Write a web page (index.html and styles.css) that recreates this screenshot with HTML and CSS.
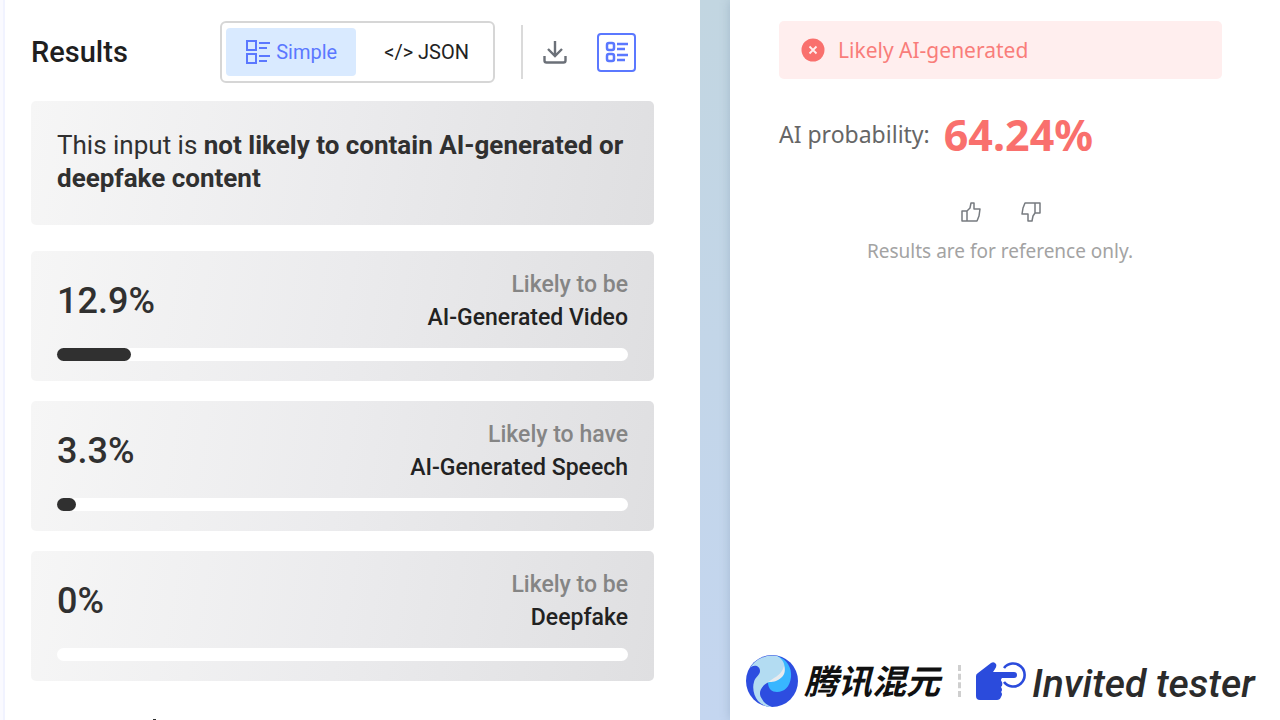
FILE: index.html
```html
<!DOCTYPE html>
<html lang="en">
<head>
    <meta charset="UTF-8">
    <meta name="viewport" content="width=device-width, initial-scale=1.0">
    <link rel="stylesheet" href="styles.css">
    <title>Results</title>
</head>
<body>
    <main class="results">
        <div class="topbar">
            <h1 class="title">Results</h1>
            <div class="tabs">
                <button type="button" class="tab active">
                    <svg width="25" height="25" viewBox="0 0 25 25" fill="none" stroke="currentColor" stroke-width="2">
                        <rect x="1" y="1" width="9" height="9"/>
                        <rect x="1" y="14" width="9" height="9"/>
                        <path d="M13 3h11M13 8h8M13 16h11M13 21h8"/>
                    </svg>
                    Simple
                </button>
                <button type="button" class="tab">&lt;/&gt; JSON</button>
            </div>
            <div class="tools">
                <button type="button" class="tool" aria-label="Download">
                    <svg width="24" height="24" viewBox="0 0 24 24" fill="none" stroke="currentColor" stroke-width="2.4">
                        <path d="M12 1v14M5 9l7 7l7-7M1.500 16v4.500q0 2 2 2h17q2 0 2-2V16"/>
                    </svg>
                </button>
                <button type="button" class="tool boxed" aria-label="Summary view">
                    <svg width="24" height="22" viewBox="0 0 24 22" fill="none" stroke="currentColor" stroke-width="2.500">
                        <rect x="2" y="2" width="7" height="7" rx="2"/>
                        <rect x="2" y="13" width="7" height="7" rx="2"/>
                        <path d="M12 3h11M12 8h8M12 14h11M12 19h8"/>
                    </svg>
                </button>
            </div>
        </div>

        <p class="card summary">This input is <b>not likely to contain AI-generated or deepfake content</b></p>

        <section class="card score">
            <span class="percent">12.9%</span>
            <p class="label">Likely to be <b>AI-Generated Video</b></p>
            <div class="bar"><div class="fill" style="width: 12.9%"></div></div>
        </section>
        <section class="card score">
            <span class="percent">3.3%</span>
            <p class="label">Likely to have <b>AI-Generated Speech</b></p>
            <div class="bar"><div class="fill" style="width: 3.3%"></div></div>
        </section>
        <section class="card score">
            <span class="percent">0%</span>
            <p class="label">Likely to be <b>Deepfake</b></p>
            <div class="bar"><div class="fill" style="width: 0%"></div></div>
        </section>
        <div class="next"></div>
    </main>

    <aside class="detector">
        <div class="panel">
            <div class="alert">
                <svg width="24" height="24" viewBox="0 0 24 24">
                    <circle cx="12" cy="12" r="11.500" fill="#f9706d"/>
                    <path d="M8.500 8.500l7 7M15.500 8.500l-7 7" stroke="#ffeeee" stroke-width="1.800"/>
                </svg>
                Likely AI-generated
            </div>
            <p class="probability">AI probability: <strong>64.24%</strong></p>
            <div class="votes">
                <button type="button" class="vote" aria-label="Good result">
                    <svg width="20" height="20" viewBox="0 0 20 20" fill="none" stroke="currentColor" stroke-width="1.500" stroke-linejoin="round">
                        <path d="M1 9h5v10H1zM6 9l3-3l1-5h3v6h6l-1 7l-2 5H6"/>
                    </svg>
                </button>
                <button type="button" class="vote" aria-label="Bad result">
                    <svg width="20" height="20" viewBox="0 0 20 20" fill="none" stroke="currentColor" stroke-width="1.500" stroke-linejoin="round">
                        <path d="M14 1h5v10h-5zM14 1H4L2 6l-1 6h6v7h4l1-5l2-3"/>
                    </svg>
                </button>
            </div>
            <p class="note">Results are for reference only.</p>

            <div class="brand">
                <svg width="52" height="52" viewBox="0 0 52 52">
                    <circle cx="26" cy="26" r="26" fill="#2d4de0"/>
                    <path d="M31 1C41 4 46 13 45 22C44 32 38 37 31 37C26 37 22 34 22 27z" fill="#38b6ff"/>
                    <path d="M4 13A26 26 0 0 1 31 1C37 4 40 10 38 16C35 23 27 25 21 28C14 32 12 39 16 44C18 48 21 50 26 52C21 52 16 50 12 46C8 41 6 33 8 27C9 22 14 20 14 16C14 11 8 9 4 13z" fill="#b3dcf2"/>
                    <path d="M38 11C36 19 31 21 22 27C31 28 42 21 38 11z" fill="#e6eaee"/>
                </svg>
                <span class="brand-name" lang="zh">腾讯混元</span>
                <span class="dots"></span>
                <svg width="52" height="38" viewBox="0 0 52 38">
                    <path d="M0 14Q0 12 2 11L15 1Q18-1 20 2Q21 4 19 7L17 10H38Q41 10 41 13Q41 16 38 16H26Q24 18 26 20Q27 23 25 25Q27 28 25 30Q27 32 25 35Q24 38 21 38H4Q0 38 0 34z" fill="#2b4bdc"/>
                    <path d="M28 6A11.500 11.500 0 1 1 28 20" fill="none" stroke="#2b4bdc" stroke-width="2.600"/>
                </svg>
                <span class="tester">Invited tester</span>
            </div>
        </div>
    </aside>
</body>
</html>
```
FILE: styles.css
```css
*{
    box-sizing: border-box;
}
body{
    margin: 0;
    height: 100vh;
    overflow: hidden;
    display: grid;
    grid-template-columns: 700fr 580fr;
    font-family: Roboto, "Liberation Sans", sans-serif;
    background-color: white;
}
h1, p{
    margin: 0;
}
button{
    border: 0;
    padding: 0;
    background: none;
    font: inherit;
    cursor: pointer;
}
svg{
    display: block;
    flex: none;
}

/* left side */
.results{
    display: flex;
    flex-direction: column;
    gap: 20px;
    padding: 21px 46px 0 28px;
    border-left: 3px solid #fafaff;
    box-shadow: inset 2px 0 #f1f3ff;
    min-height: 0;
    overflow: hidden;
}
.topbar{
    display: flex;
    align-items: center;
    height: 62px;
    margin-bottom: -2px;
    flex: none;
}
.title{
    font-size: 29px;
    line-height: 36px;
    font-weight: 500;
    color: #1f1f1f;
    margin-right: auto;
}
.tabs{
    display: flex;
    height: 62px;
    padding: 5px 4px;
    border: 2px solid #d6d6d6;
    border-radius: 6px;
}
.tab{
    display: flex;
    align-items: center;
    gap: 5px;
    padding: 0 19px 0 20px;
    border-radius: 4px;
    font-size: 20px;
    color: #222222;
}
.tab + .tab{
    padding: 0 20px 0 28px;
}
.active{
    background-color: #d9eaff;
    color: #5b78ff;
}
.tools{
    display: flex;
    align-items: center;
    gap: 30px;
    height: 54px;
    margin-left: 26px;
    padding: 0 18px 0 20px;
    border-left: 2px solid #dadada;
}
.tool{
    color: #6b7078;
}
.boxed{
    display: flex;
    align-items: center;
    justify-content: center;
    width: 39px;
    height: 39px;
    border: 2px solid #5b78ff;
    border-radius: 4px;
    color: #5b78ff;
}
.card{
    flex: none;
    border-radius: 5px;
    background: linear-gradient(100deg, #f6f6f6, #ebebed 50%, #dfdfe1);
    color: #303030;
}
.summary{
    padding: 28px 26px 30px;
    margin-bottom: 6px;
    font-size: 26px;
    line-height: 33px;
}
.summary b{
    font-weight: 700;
}
.score{
    display: grid;
    grid-template-columns: auto 1fr;
    align-items: center;
    row-gap: 14px;
    padding: 17px 26px 20px;
}
.percent{
    font-size: 36px;
    font-weight: 500;
}
.label{
    text-align: right;
    font-size: 23px;
    line-height: 33px;
    font-weight: 500;
    color: #858585;
}
.label b{
    display: block;
    font-weight: 500;
    color: #222222;
}
.bar{
    grid-column: 1 / 3;
    height: 13px;
    border-radius: 7px;
    background-color: white;
}
.fill{
    height: 13px;
    border-radius: 7px;
    background-color: #303030;
}
.next{
    flex: none;
    width: 3px;
    height: 20px;
    margin: 18px 0 0 122px;
    background-color: #303030;
}

/* right side */
.detector{
    padding-left: 30px;
    background: linear-gradient(#c2d6e1, #c4d6f0);
    font-family: "Noto Sans", "Open Sans", sans-serif;
}
.panel{
    display: flex;
    flex-direction: column;
    height: 100vh;
    padding: 21px 16px 12px;
    background-color: white;
    box-shadow: 0 0 10px rgba(90, 120, 150, 0.3);
}
.alert{
    display: flex;
    align-items: center;
    gap: 13px;
    height: 58px;
    margin: 0 42px 0 33px;
    padding-left: 22px;
    border-radius: 5px;
    background-color: #ffeeee;
    color: #f97d7a;
    font-size: 21px;
}
.probability{
    display: flex;
    align-items: center;
    gap: 14px;
    height: 60px;
    margin: 25px 0 0 33px;
    font-size: 23px;
    color: #666666;
}
.probability strong{
    font-size: 43px;
    color: #f9706d;
}
.votes{
    display: flex;
    justify-content: center;
    gap: 40px;
    margin-top: 38px;
    padding-right: 8px;
}
.vote{
    color: #777b80;
}
.note{
    margin-top: 14px;
    padding-right: 10px;
    text-align: center;
    font-size: 19px;
    line-height: 30px;
    color: #a3a3a3;
}
.brand{
    display: flex;
    align-items: center;
    height: 54px;
    margin-top: auto;
    white-space: nowrap;
}
.brand-name{
    margin-left: 6px;
    padding-bottom: 4px;
    font-family: "Noto Sans CJK SC", sans-serif;
    font-size: 34px;
    font-weight: 700;
    font-style: italic;
    color: #111111;
}
.dots{
    height: 32px;
    margin: 0 15px 0 18px;
    border-left: 3px dashed #cfcfcf;
}
.tester{
    margin-left: 4px;
    padding-top: 6px;
    font-family: Roboto, sans-serif;
    font-size: 39px;
    font-weight: 500;
    font-style: italic;
    color: #2b2b2b;
}
```
